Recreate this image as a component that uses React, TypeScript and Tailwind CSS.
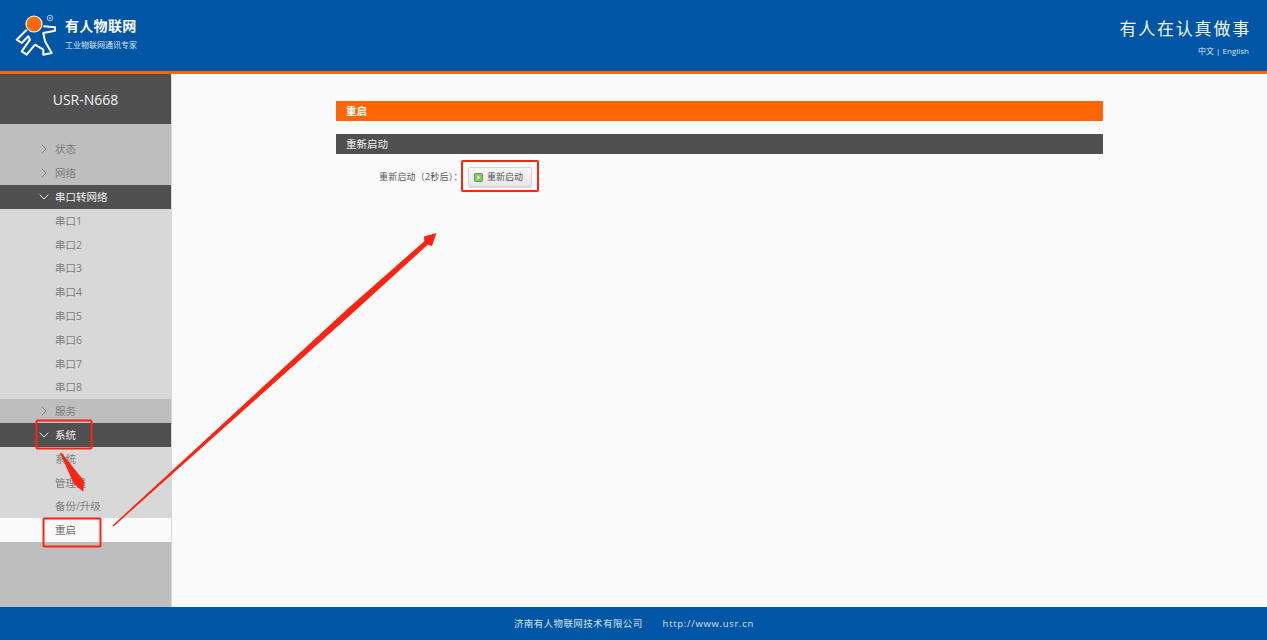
import { ChevronDown, ChevronRight } from 'lucide-react';

const font = { cjk: "font-['Open_Sans','Noto_Sans_CJK_SC',sans-serif]" };

type NavItem = { label: string; kind: 'group' | 'open' | 'child' | 'active' };

const navItems: NavItem[] = [
  { label: '状态', kind: 'group' },
  { label: '网络', kind: 'group' },
  { label: '串口转网络', kind: 'open' },
  { label: '串口1', kind: 'child' },
  { label: '串口2', kind: 'child' },
  { label: '串口3', kind: 'child' },
  { label: '串口4', kind: 'child' },
  { label: '串口5', kind: 'child' },
  { label: '串口6', kind: 'child' },
  { label: '串口7', kind: 'child' },
  { label: '串口8', kind: 'child' },
  { label: '服务', kind: 'group' },
  { label: '系统', kind: 'open' },
  { label: '系统', kind: 'child' },
  { label: '管理员', kind: 'child' },
  { label: '备份/升级', kind: 'child' },
  { label: '重启', kind: 'active' },
];

function Logo() {
  return (
    <svg width="42" height="43" viewBox="0 0 42 43" className="shrink-0">
      <path
        d="M11.7 15.7 L1.7 25.7 L6.7 29 L13.3 22.3 L15 25.7 L6.7 37.3 L11.7 40.7 L20 30.7 L28.3 35.7 L28.3 40.7 L36.7 39 L30 27.3 L28.3 19 L40 16.7 L40 13.3 L28.3 12.3"
        fill="none"
        stroke="#fff"
        strokeWidth="2"
        strokeLinejoin="round"
      />
      <circle cx="19" cy="10" r="8" fill="#ff6a00" stroke="#fff" strokeWidth="1.2" />
      <circle cx="35" cy="4" r="2.8" fill="none" stroke="#b9cde6" strokeWidth="1" />
      <circle cx="35" cy="4" r="1" fill="#b9cde6" />
    </svg>
  );
}

function Header() {
  return (
    <header className="h-[74px] shrink-0 border-b-[3px] border-[#ff6600] bg-[#0055a5] flex items-start justify-between text-white">
      <div className="flex items-start pl-[15px] pt-[14px] gap-[8px]">
        <Logo />
        <div className="mt-[3px]">
          <div className="text-[14px] leading-[18px] font-bold tracking-[0.3px]">有人物联网</div>
          <div className="text-[8px] leading-[12px] mt-[4px] text-[#dbe8f5]">工业物联网通讯专家</div>
        </div>
      </div>
      <div className="pr-[16px] pt-[19px] text-right">
        <div className="text-[17px] leading-[20px] tracking-[1.8px] text-[#f0f4fa]">有人在认真做事</div>
        <div className="text-[8px] leading-[12px] mt-[6px] pr-[2px] text-[#dbe8f5]">中文 | English</div>
      </div>
    </header>
  );
}

function Sidebar() {
  return (
    <aside className="w-[172px] shrink-0 bg-[#bebebe] border-r border-[#d8d8d8] text-[10.5px]">
      <div className="h-[50px] bg-[#505050] text-[#f2f2f2] text-[14px] flex items-center justify-center">USR-N668</div>
      <ul className="pt-[13.5px]">
        {navItems.map((item, i) => {
          if (item.kind === 'open') {
            return (
              <li key={i} className="h-[23.8px] bg-[#505050] text-[#f2f2f2] flex items-center pl-[35.5px] gap-[3.5px] leading-[26px]">
                <ChevronDown className="w-[16px] h-[16px]" strokeWidth={1.4} />
                {item.label}
              </li>
            );
          }
          if (item.kind === 'group') {
            return (
              <li key={i} className="h-[23.8px] text-[#7d7d7d] flex items-center pl-[35.5px] gap-[3.5px] leading-[26px]">
                <ChevronRight className="w-[16px] h-[16px]" strokeWidth={1.4} />
                {item.label}
              </li>
            );
          }
          return (
            <li
              key={i}
              className={
                item.kind === 'active'
                  ? 'h-[23.8px] bg-[#fafafa] text-[#707070] flex items-center pl-[55px] leading-[26px]'
                  : 'h-[23.8px] bg-[#d8d8d8] text-[#7d7d7d] flex items-center pl-[55px] leading-[26px]'
              }
            >
              {item.label}
            </li>
          );
        })}
      </ul>
    </aside>
  );
}

function Content() {
  return (
    <main className="flex-1 bg-[#fafafa] pt-[27px]">
      <div className="w-[767px] mx-auto">
        <div className="h-[20px] bg-[#ff6600] text-white text-[10.5px] font-bold leading-[20px] pl-[10px]">重启</div>
        <div className="h-[20px] mt-[13px] bg-[#505050] text-[#f2f2f2] text-[10.5px] leading-[21px] pl-[10px]">重新启动</div>
        <div className="flex items-center mt-[11px] h-[24px]">
          <span className="text-[9px] text-[#555] ml-[43px] w-[89px] tracking-[0.2px]">重新启动（2秒后）：</span>
          <button className="h-[20px] w-[64px] rounded-[2px] border border-[#d4d4d4] bg-gradient-to-b from-[#fafafa] to-[#e6e6e6] shadow-[0_1px_1px_rgba(0,0,0,0.12)] flex items-center pl-[5px] gap-[4px] text-[9px] text-[#555]">
            <svg width="9" height="9" viewBox="0 0 9 9" className="shrink-0">
              <rect x="0.5" y="0.5" width="8" height="8" rx="1" fill="#8cc86a" stroke="#55a03a" />
              <path d="M3.4 2.6 L6.2 4.5 L3.4 6.4 Z" fill="#e8f6df" />
            </svg>
            重新启动
          </button>
        </div>
      </div>
    </main>
  );
}

function Annotations() {
  return (
    <svg width="1267" height="640" viewBox="0 0 1267 640" className="absolute inset-0 pointer-events-none">
      <g fill="none" stroke="#fb2412" strokeWidth="2">
        <rect x="462" y="161" width="76" height="30" rx="1" />
        <rect x="36.5" y="420.5" width="55" height="28" rx="1" />
        <rect x="43.5" y="518.5" width="57" height="28" rx="1" />
      </g>
      <path
        d="M112.5 525.5 L347.9 308.6 L424.3 241.2 L424 236.5 L436.5 233 L432 246 L427.7 244.8 L352.1 313.4 L113.5 526.5 Z"
        fill="#fb2412"
      />
      <path d="M60 453 L74 484 L83.3 491.7 L84 481 L61.7 453 Z" fill="#fb2412" />
    </svg>
  );
}

export default function App() {
  return (
    <div className={`relative w-[1267px] h-[640px] overflow-hidden flex flex-col ${font.cjk}`}>
      <Header />
      <div className="flex-1 flex min-h-0">
        <Sidebar />
        <Content />
      </div>
      <footer className="h-[33px] shrink-0 bg-[#0055a5] text-[#d5e2f1] text-[9.5px] leading-[34px] flex justify-center gap-[20px] tracking-[0.4px] pl-[1px]">
        <span>济南有人物联网技术有限公司</span>
        <span className="tracking-[0.7px]">http://www.usr.cn</span>
      </footer>
      <Annotations />
    </div>
  );
}
